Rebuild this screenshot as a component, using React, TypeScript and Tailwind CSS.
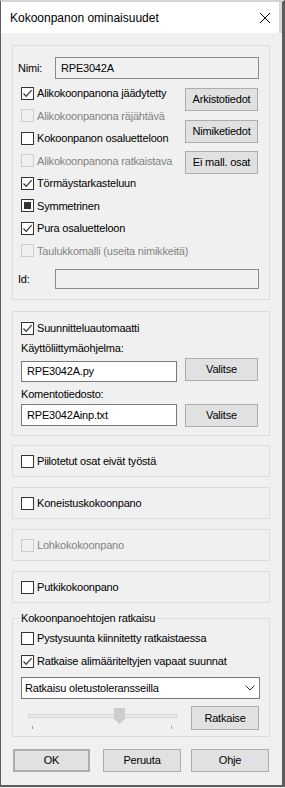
import React from "react";
import clsx from "clsx";

type CheckState = "on" | "off" | "mixed";

const Check = ({ label, state = "off", disabled = false }: { label: string; state?: CheckState; disabled?: boolean }) => (
  <div className="flex items-center h-full whitespace-nowrap">
    <span
      className={clsx(
        "w-[13px] h-[13px] border flex items-center justify-center shrink-0",
        disabled ? "border-[#cccccc] bg-[#f0f0f0]" : "border-[#333333] bg-white"
      )}
    >
      {state === "on" && (
        <svg width="11" height="11" viewBox="0 0 11 11">
          <polyline points="1.5,5.5 4.2,8.3 9.6,2.2" fill="none" stroke="#333333" strokeWidth="1.2" />
        </svg>
      )}
      {state === "mixed" && <span className="w-[7px] h-[7px] bg-[#333333]" />}
    </span>
    <span className={clsx("ml-[3px]", disabled ? "text-[#838383]" : "text-black")}>{label}</span>
  </div>
);

const Btn = ({ children, className }: { children: React.ReactNode; className?: string }) => (
  <button className={clsx("bg-[#e1e1e1] border border-[#adadad] text-black flex items-center justify-center", className)}>
    {children}
  </button>
);

const Field = ({ value, className }: { value: string; className?: string }) => (
  <div className={clsx("border flex items-center pl-[5px] whitespace-nowrap", className)}>{value}</div>
);

export default function App() {
  return (
    <div className="w-[285px] h-[788px] bg-[#f0f0f0] font-['Liberation_Sans',Arial,sans-serif] text-[11px] tracking-[-0.2px] text-black">
      <div className="h-[787px] flex flex-col border-t-2 border-t-[#d4d4d4] border-l border-l-[#5c5c5c] border-r-[3px] border-r-[#5c5c5c] border-b-2 border-b-[#5c5c5c]">
        {/* title bar */}
        <div className="h-[31px] bg-white border-r-[3px] border-r-[#dadada] flex items-center justify-between pl-[9px] pr-[8px]">
          <span className="text-[12px] tracking-normal">Kokoonpanon ominaisuudet</span>
          <svg width="12" height="12" viewBox="0 0 12 12">
            <path d="M1 1 L11 11 M11 1 L1 11" stroke="#000" strokeWidth="1" />
          </svg>
        </div>

        {/* general */}
        <div className="mt-[12px] ml-[11px] w-[258px] h-[255px] border border-[#dcdcdc] pt-[11px]">
          <div className="flex items-center h-[22px]">
            <span className="w-[42px] pl-[5px]">Nimi:</span>
            <Field value="RPE3042A" className="w-[204px] h-[22px] border-[#8c8c8c] bg-[#f0f0f0]" />
          </div>
          <div className="flex mt-[3px]">
            <div className="w-[172px] pl-[8px] flex flex-col">
              <div className="h-[22.5px]"><Check label="Alikokoonpanona jäädytetty" state="on" /></div>
              <div className="h-[22.5px]"><Check label="Alikokoonpanona räjähtävä" disabled /></div>
              <div className="h-[22.5px]"><Check label="Kokoonpanon osaluetteloon" /></div>
              <div className="h-[22.5px]"><Check label="Alikokoonpanona ratkaistava" disabled /></div>
              <div className="h-[22.5px]"><Check label="Törmäystarkasteluun" state="on" /></div>
              <div className="h-[22.5px]"><Check label="Symmetrinen" state="mixed" /></div>
              <div className="h-[22.5px]"><Check label="Pura osaluetteloon" state="on" /></div>
              <div className="h-[22.5px]"><Check label="Taulukkomalli (useita nimikkeitä)" disabled /></div>
            </div>
            <div className="mt-[6px] flex flex-col gap-[8.5px]">
              <Btn className="w-[73px] h-[23px]">Arkistotiedot</Btn>
              <Btn className="w-[73px] h-[23px]">Nimiketiedot</Btn>
              <Btn className="w-[73px] h-[23px]">Ei mall. osat</Btn>
            </div>
          </div>
          <div className="flex items-center h-[20px] mt-[7px]">
            <span className="w-[42px] pl-[5px]">Id:</span>
            <Field value="" className="w-[204px] h-[20px] border-[#8c8c8c] bg-[#f0f0f0]" />
          </div>
        </div>

        {/* automation */}
        <div className="mt-[11px] ml-[11px] w-[258px] h-[125px] border border-[#dcdcdc] px-[8px] pt-[5px]">
          <div className="h-[22px]"><Check label="Suunnitteluautomaatti" state="on" /></div>
          <div className="mt-[2px] h-[14px] leading-[14px]">Käyttöliittymäohjelma:</div>
          <div className="mt-[3px] flex items-start h-[23px]">
            <Field value="RPE3042A.py" className="mt-[3px] w-[156px] h-[21px] border-[#7a7a7a] bg-white" />
            <Btn className="ml-[8px] w-[73px] h-[23px]">Valitse</Btn>
          </div>
          <div className="mt-[6px] h-[14px] leading-[14px]">Komentotiedosto:</div>
          <div className="mt-[3px] flex items-start h-[23px]">
            <Field value="RPE3042Ainp.txt" className="w-[156px] h-[22px] border-[#7a7a7a] bg-white" />
            <Btn className="ml-[8px] w-[73px] h-[23px]">Valitse</Btn>
          </div>
        </div>

        <div className="mt-[9px] ml-[11px] w-[258px] h-[32px] border border-[#dcdcdc] px-[8px]">
          <Check label="Piilotetut osat eivät työstä" />
        </div>
        <div className="mt-[10px] ml-[11px] w-[258px] h-[32px] border border-[#dcdcdc] px-[8px]">
          <Check label="Koneistuskokoonpano" />
        </div>
        <div className="mt-[10px] ml-[11px] w-[258px] h-[32px] border border-[#dcdcdc] px-[8px]">
          <Check label="Lohkokokoonpano" disabled />
        </div>
        <div className="mt-[10px] ml-[11px] w-[258px] h-[32px] border border-[#dcdcdc] px-[8px]">
          <Check label="Putkikokoonpano" />
        </div>

        {/* solving */}
        <fieldset className="mt-[8px] ml-[11px] w-[258px] border border-[#dcdcdc] px-[8px] pb-[6px]">
          <legend className="ml-[-2px] px-[2px] h-[14px] leading-[14px]">Kokoonpanoehtojen ratkaisu</legend>
          <div className="mt-[2px] h-[23px]"><Check label="Pystysuunta kiinnitetty ratkaistaessa" /></div>
          <div className="h-[23px]"><Check label="Ratkaise alimääriteltyjen vapaat suunnat" state="on" /></div>
          <div className="mt-[4px] w-[239px] h-[22px] border border-[#7a7a7a] bg-white flex items-center justify-between pl-[3px] pr-[4px]">
            <span>Ratkaisu oletustoleransseilla</span>
            <svg width="10" height="6" viewBox="0 0 10 6">
              <polyline points="0.5,0.5 5,5 9.5,0.5" fill="none" stroke="#333333" strokeWidth="1" />
            </svg>
          </div>
          <div className="mt-[7px] flex h-[24px]">
            <svg width="170" height="24" viewBox="0 0 170 24">
              <rect x="7.5" y="8.5" width="148" height="3" fill="#e7eaea" stroke="#d6d6d6" />
              <polygon points="93,2 104,2 104,13 98.5,18 93,13" fill="#cdcdcd" />
              <line x1="11.5" y1="20" x2="11.5" y2="23" stroke="#a0a0a0" />
              <line x1="150.5" y1="20" x2="150.5" y2="23" stroke="#a0a0a0" />
            </svg>
            <Btn className="w-[68px] h-[24px]">Ratkaise</Btn>
          </div>
        </fieldset>

        <div className="mt-[12px] flex">
          <Btn className="ml-[12px] w-[77px] h-[23px] border-2 border-[#0078d7]">OK</Btn>
          <Btn className="ml-[13px] w-[78px] h-[23px]">Peruuta</Btn>
          <Btn className="ml-[10px] w-[78px] h-[23px]">Ohje</Btn>
        </div>
      </div>
    </div>
  );
}
